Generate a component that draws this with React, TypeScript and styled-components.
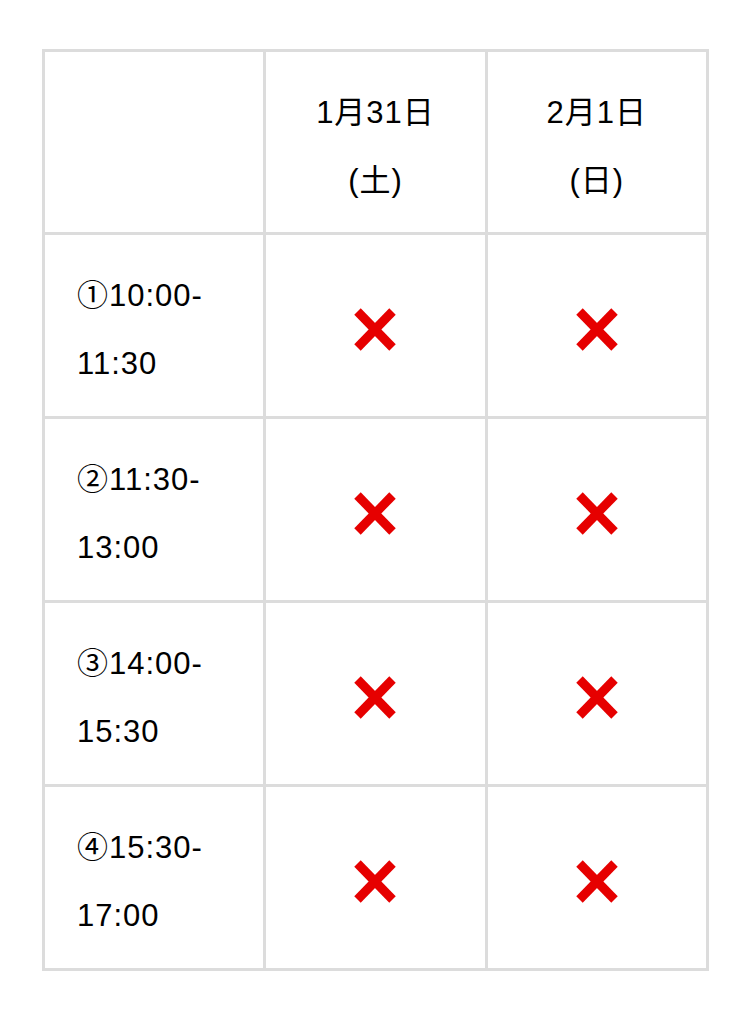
import { Fragment } from 'react'
import styled, { createGlobalStyle } from 'styled-components'

const GlobalStyle = createGlobalStyle`
  html, body {
    margin: 0;
    padding: 0;
    background: #ffffff;
  }
  body {
    font-family: "Liberation Sans", "Noto Sans CJK JP", Arial, sans-serif;
    color: #000000;
  }
`

const Page = styled.div`
  padding: 49px 0 0 42px;
`

const Table = styled.div`
  display: grid;
  grid-template-columns: repeat(3, 221.33px);
  width: 667px;
  border-top: 3px solid #dcdcdc;
  border-left: 3px solid #dcdcdc;
  box-sizing: border-box;
`

const Cell = styled.div<{ $head?: boolean, $center?: boolean }>`
  box-sizing: border-box;
  border-right: 3px solid #dcdcdc;
  border-bottom: 3px solid #dcdcdc;
  padding: ${({ $head }) => $head ? '27px 8px 17px' : '27px 8px 18px 32px'};
  font-size: 31px;
  letter-spacing: 1px;
  line-height: 68px;
  text-align: ${({ $center }) => $center ? 'center' : 'left'};
  white-space: pre-line;
`

const MarkCell = styled.div`
  box-sizing: border-box;
  border-right: 3px solid #dcdcdc;
  border-bottom: 3px solid #dcdcdc;
  display: flex;
  align-items: center;
  justify-content: center;
  padding-top: 8px;
`

const Cross = () => (
  <svg width='42' height='43' viewBox='0 0 42 43'>
    <g stroke='#e60000' strokeWidth='9' strokeLinecap='butt'>
      <line x1='3.5' y1='3.5' x2='38.5' y2='39.5' />
      <line x1='38.5' y1='3.5' x2='3.5' y2='39.5' />
    </g>
  </svg>
)

const days = ['1月31日\n(土)', '2月1日\n(日)']

const slots = [
  '①10:00-\n11:30',
  '②11:30-\n13:00',
  '③14:00-\n15:30',
  '④15:30-\n17:00'
]

const App = () => {
  return (
    <Page>
      <GlobalStyle />
      <Table>
        <Cell $head $center />
        {days.map((day) => (
          <Cell key={day} $head $center>{day}</Cell>
        ))}
        {slots.map((slot) => (
          <Fragment key={slot}>
            <Cell>{slot}</Cell>
            {days.map((day) => (
              <MarkCell key={`${slot}-${day}`}>
                <Cross />
              </MarkCell>
            ))}
          </Fragment>
        ))}
      </Table>
    </Page>
  )
}

export default App
